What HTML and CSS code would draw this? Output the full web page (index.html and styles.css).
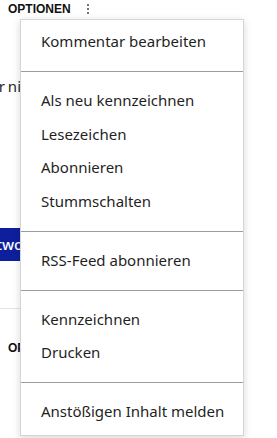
FILE: index.html
```html
<!DOCTYPE html>
<html>
<head>
    <meta charset="UTF-8">
    <title>Optionen</title>
    <link rel="stylesheet" href="styles.css">
</head>
<body>
    <div class="page">
        <div class="head-row">
            <span class="head-label">OPTIONEN</span>
            <span class="dots"><i></i><i></i><i></i></span>
        </div>
        <p class="cut-text">oder nicht</p>
        <div class="reply-row">
            <span class="reply-btn">Antworten</span>
        </div>
        <hr class="rule">
        <div class="head-row second">
            <span class="head-label">OPTIONEN</span>
        </div>
    </div>

    <ul class="menu">
        <li class="item">Kommentar bearbeiten</li>
        <li class="sep"></li>
        <li class="item">Als neu kennzeichnen</li>
        <li class="item">Lesezeichen</li>
        <li class="item">Abonnieren</li>
        <li class="item">Stummschalten</li>
        <li class="sep"></li>
        <li class="item">RSS-Feed abonnieren</li>
        <li class="sep"></li>
        <li class="item">Kennzeichnen</li>
        <li class="item">Drucken</li>
        <li class="sep"></li>
        <li class="item">Anstößigen Inhalt melden</li>
    </ul>
</body>
</html>
```

FILE: styles.css
```css
html, body{
    margin: 0;
    padding: 0;
    background: #fff;
}
body{
    font-family: "Noto Sans", "Open Sans", sans-serif;
    color: #1f1f1f;
    overflow: hidden;
    height: 438px;
    position: relative;
}
.page{
    padding: 3px 0 0 8px;
}
.head-row{
    display: flex;
    align-items: center;
    gap: 16px;
    height: 12px;
}
.head-label{
    font-family: "Liberation Sans", Arial, sans-serif;
    font-weight: bold;
    font-size: 12px;
    color: #111;
}
.dots{
    display: flex;
    flex-direction: column;
    gap: 2px;
}
.dots i{
    display: block;
    width: 2px;
    height: 2px;
    border-radius: 50%;
    background: #444;
}
.cut-text{
    margin: 61px 0 0 -36px;
    font-size: 15px;
    line-height: 20px;
    word-spacing: -1px;
}
.reply-row{
    margin: 132px 0 0 -8px;
}
.reply-btn{
    display: inline-block;
    margin-left: -37px;
    padding: 0 14px;
    height: 33px;
    line-height: 33px;
    background: #0e1f9b;
    color: #fff;
    font-size: 15px;
    font-weight: 500;
}
.rule{
    margin: 47px 0 0 -8px;
    border: 0;
    border-top: 1px solid #e4e4e4;
    width: 60px;
}
.head-row.second{
    margin-top: 33px;
}

/* menu over the page */
.menu{
    position: absolute;
    left: 20px;
    top: 19px;
    width: 222px;
    margin: 0;
    padding: 5px 0 6px;
    list-style: none;
    background: #fff;
    border: 1px solid #d6d6d6;
    box-shadow: 0 2px 8px rgba(0, 0, 0, 0.16);
}
.item{
    height: 33.75px;
    line-height: 32px;
    font-size: 15px;
    padding-left: 20px;
    color: #1f1f1f;
    white-space: nowrap;
    box-sizing: border-box;
}
.sep{
    height: 1px;
    margin: 12px 0;
    background: #9c9c9c;
}
```
